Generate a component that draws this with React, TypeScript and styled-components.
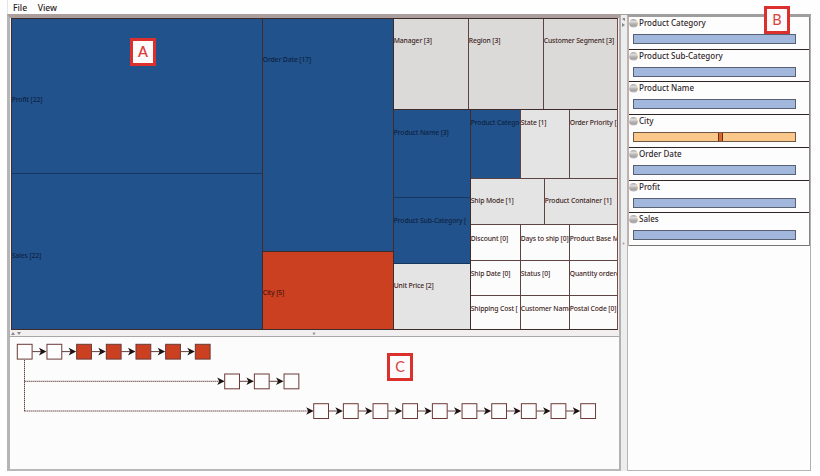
import React from "react";
import styled, { createGlobalStyle } from "styled-components";

const GlobalStyle = createGlobalStyle`
  * { box-sizing: border-box; }
  body { margin: 0; background: #fefefe; font-family: "Noto Sans", "DejaVu Sans", sans-serif; }
`;

const BLUE = "#22528b";
const RED = "#cc4022";
const GRAY = "#dbdad9";
const LIGHT = "#e5e4e4";
const WHITE = "#fdfcfc";

const Page = styled.div`
  position: relative;
  width: 820px;
  height: 476px;
  overflow: hidden;
  display: flex;
  flex-direction: column;
`;

const MenuBar = styled.nav`
  height: 14px;
  margin-left: 7px;
  padding: 2px 0 0 5px;
  display: flex;
  gap: 10.5px;
  border-left: 1px solid #e2e6e8;
  font-size: 8.6px;
  line-height: 12px;
  font-weight: 500;
  color: #2a2422;
`;

const MenuItem = styled.span``;

const Workspace = styled.main`
  display: flex;
  width: 804px;
  height: 457px;
  margin-left: 7px;
`;

const LeftPane = styled.section`
  display: flex;
  flex-direction: column;
  width: 614px;
  border-style: solid;
  border-color: #ab9e9d #b3b0b2 #b9b9ba #b4b5b6;
  border-width: 4px 2px 2px 3px;
  background: #f1efef;
`;

const TreeMap = styled.div`
  display: flex;
  gap: 1px;
  width: 607px;
  height: 312px;
  margin-left: 1px;
  flex: none;
  border: 1px solid #3e2c2b;
  border-right-color: #7a4a44;
  background: #3e2c2b;
`;

const Split = styled.div<{ $dir: "row" | "column"; $w?: number; $h?: number; $line?: string }>`
  display: flex;
  flex: none;
  gap: 1px;
  flex-direction: ${(p) => p.$dir};
  width: ${(p) => (p.$w ? `${p.$w}px` : "auto")};
  height: ${(p) => (p.$h ? `${p.$h}px` : "auto")};
  background: ${(p) => p.$line ?? "transparent"};
`;

const Tile = styled.div<{ $bg: string; $w?: number; $h?: number; $top: number }>`
  flex: ${(p) => (p.$w || p.$h ? "none" : "1")};
  width: ${(p) => (p.$w ? `${p.$w}px` : "auto")};
  height: ${(p) => (p.$h ? `${p.$h}px` : "auto")};
  padding-top: ${(p) => p.$top}px;
  overflow: hidden;
  white-space: nowrap;
  background: ${(p) => p.$bg};
  color: ${(p) => (p.$bg === BLUE ? "#0c2343" : p.$bg === RED ? "#4d150d" : "#3d2523")};
  font-size: 6.8px;
  line-height: 10px;
  letter-spacing: -0.12px;
  text-indent: -0.3px;
  font-weight: 500;
`;

const HSplitter = styled.div`
  display: flex;
  height: 7px;
  flex: none;
  align-items: center;
  padding-left: 1px;
  border-bottom: 1px solid #aaa6a7;
`;

const Graph = styled.div`
  flex: 1;
  background: ${WHITE};
  svg { display: block; }
`;

const VSplitter = styled.div`
  width: 6px;
  background: #ededee;
  border-top: 1px solid #a5a1a2;
  padding-top: 3px;
  svg { display: block; }
`;

const RightPane = styled.aside`
  flex: 1;
  border: 1px solid #b6b5b6;
  border-top: 3px solid #a09d9e;
  border-right: 1px solid #b0b0b1;
  background: #fefdfd;
`;

const FilterList = styled.ul`
  margin: 0;
  padding: 0;
  list-style: none;
  height: 229px;
  display: grid;
  grid-template-rows: repeat(7, 1fr);
  border-right: 1px solid #858385;
  border-left: 1px solid #c9aaa4;
`;

const FilterRow = styled.li`
  border-bottom: 1px solid #302424;
  padding-top: 1px;
  &:last-child { border-bottom-color: #797475; }
`;

const FilterHead = styled.div`
  display: flex;
  align-items: center;
  gap: 1px;
  height: 10px;
  font-size: 8px;
  font-weight: 500;
  line-height: 10px;
  color: #30272a;
  white-space: nowrap;
  svg { flex: none; }
`;

const Range = styled.div<{ $active?: boolean }>`
  display: flex;
  justify-content: center;
  width: 163px;
  height: 10px;
  margin: 6px 0 0 4px;
  border: 1px solid ${(p) => (p.$active ? "#725644" : "#586074")};
  background: ${(p) => (p.$active ? "#fbc88b" : "#a1b7db")};
`;

const Thumb = styled.span`
  width: 5px;
  margin-left: 12px;
  border: solid #6d2c14;
  border-width: 0 1px;
  background: #d8682b;
`;

const Badge = styled.div<{ $x: number; $y: number; $bold?: boolean }>`
  position: absolute;
  left: ${(p) => p.$x}px;
  top: ${(p) => p.$y}px;
  width: 26px;
  height: 28px;
  border: 3px solid #dc302d;
  background: #fdfbfb;
  color: #d8413c;
  font: ${(p) => (p.$bold ? 600 : 400)} 14.5px/22px Lato, "Open Sans", sans-serif;
  text-align: center;
`;

const names = ["Product Category", "Product Sub-Category", "Product Name", "City", "Order Date", "Profit", "Sales"];

const Ball = () => (
  <svg width="9" height="10" viewBox="0 0 9 10">
    <defs>
      <linearGradient id="ball" x1="0" y1="0" x2="0" y2="1">
        <stop offset="0" stopColor="#a5a3a3" />
        <stop offset="0.3" stopColor="#dedddd" />
        <stop offset="0.55" stopColor="#b5b3b3" />
        <stop offset="0.8" stopColor="#a3a1a1" />
        <stop offset="1" stopColor="#dddcdc" />
      </linearGradient>
    </defs>
    <circle cx="4.5" cy="5.4" r="4.4" fill="url(#ball)" />
  </svg>
);

const PITCH = 29.67;
const chains = [
  { x: 17.3, y: 344.3, count: 7, filledFrom: 2 },
  { x: 224.7, y: 374, count: 3, filledFrom: 99 },
  { x: 313.7, y: 403.7, count: 10, filledFrom: 99 },
];

const Arrow = ({ from, tip, y, dotted }: { from: number; tip: number; y: number; dotted?: boolean }) => (
  <g>
    <line x1={from} x2={tip - 5} y1={y} y2={y} stroke="#64423f" strokeWidth="1" strokeDasharray={dotted ? "1.4 0.6" : undefined} />
    <path d={`M${tip} ${y} l-7.5 -3.8 l2 3.8 l-2 3.8 z`} fill="#1b1212" />
  </g>
);

const GraphDrawing = () => (
  <svg width="608" height="131" viewBox="10 337 608 131">
    <path d="M24.5 360 V411.2" fill="none" stroke="#64423f" strokeDasharray="1.4 0.6" />
    {chains.map((c, row) => (
      <g key={row}>
        {row > 0 && <Arrow from={24.5} tip={c.x} y={c.y + 7.3} dotted />}
        {Array.from({ length: c.count }, (_, i) => {
          const x = c.x + i * PITCH;
          return (
            <g key={i}>
              {i > 0 && <Arrow from={x - PITCH + 15} tip={x - 0.5} y={c.y + 7.3} />}
              <rect x={x} y={c.y} width="14.8" height="14.8" fill={i >= c.filledFrom ? RED : "#fefdfd"} stroke="#6b3a36" />
            </g>
          );
        })}
      </g>
    ))}
  </svg>
);

export default function App() {
  return (
    <Page>
      <GlobalStyle />
      <MenuBar>
        <MenuItem>File</MenuItem>
        <MenuItem>View</MenuItem>
      </MenuBar>
      <Workspace>
        <LeftPane>
          <TreeMap>
            <Split $dir="column" $w={250} $line="#173660">
              <Tile $bg={BLUE} $h={154} $top={76}>Profit [22]</Tile>
              <Tile $bg={BLUE} $top={77}>Sales [22]</Tile>
            </Split>
            <Split $dir="column" $w={130}>
              <Tile $bg={BLUE} $h={232} $top={36}>Order Date [17]</Tile>
              <Tile $bg={RED} $top={36}>City [5]</Tile>
            </Split>
            <Split $dir="column" $w={223}>
              <Split $dir="row" $h={90} $line="#5e4441">
                <Tile $bg={GRAY} $w={74} $top={17}>Manager [3]</Tile>
                <Tile $bg={GRAY} $w={74} $top={17}>Region [3]</Tile>
                <Tile $bg={GRAY} $top={17}>Customer Segment [3]</Tile>
              </Split>
              <Split $dir="row" $h={219}>
                <Split $dir="column" $w={76} $line="#173660">
                  <Tile $bg={BLUE} $h={87} $top={18}>Product Name [3]</Tile>
                  <Tile $bg={BLUE} $h={65} $top={18}>Product Sub-Category [</Tile>
                  <Tile $bg={LIGHT} $top={17}>Unit Price [2]</Tile>
                </Split>
                <Split $dir="column" $w={146} $line="#5e4441">
                  <Split $dir="row" $h={68}>
                    <Tile $bg={BLUE} $w={49} $top={8}>Product Catego</Tile>
                    <Tile $bg={LIGHT} $w={48} $top={8}>State [1]</Tile>
                    <Tile $bg={LIGHT} $top={8}>Order Priority [</Tile>
                  </Split>
                  <Split $dir="row" $h={45}>
                    <Tile $bg={LIGHT} $w={73} $top={17}>Ship Mode [1]</Tile>
                    <Tile $bg={LIGHT} $top={17}>Product Container [1]</Tile>
                  </Split>
                  <Split $dir="row" $h={35}>
                    <Tile $bg={WHITE} $w={49} $top={9}>Discount [0]</Tile>
                    <Tile $bg={WHITE} $w={48} $top={9}>Days to ship [0]</Tile>
                    <Tile $bg={WHITE} $top={9}>Product Base M</Tile>
                  </Split>
                  <Split $dir="row" $h={34}>
                    <Tile $bg={WHITE} $w={49} $top={8}>Ship Date [0]</Tile>
                    <Tile $bg={WHITE} $w={48} $top={8}>Status [0]</Tile>
                    <Tile $bg={WHITE} $top={8}>Quantity ordere</Tile>
                  </Split>
                  <Split $dir="row" $h={33}>
                    <Tile $bg={WHITE} $w={49} $top={8}>Shipping Cost [</Tile>
                    <Tile $bg={WHITE} $w={48} $top={8}>Customer Name</Tile>
                    <Tile $bg={WHITE} $top={8}>Postal Code [0]</Tile>
                  </Split>
                </Split>
              </Split>
            </Split>
          </TreeMap>
          <HSplitter>
            <svg width="320" height="5" viewBox="0 0 320 5">
              <path d="M0 4 l2 -3 l2 3 z M6 1 h4 l-2 3 z" fill="#8d8888" />
              <circle cx="303" cy="2.5" r="1.2" fill="#a19d9d" />
            </svg>
          </HSplitter>
          <Graph>
            <GraphDrawing />
          </Graph>
        </LeftPane>
        <VSplitter>
          <svg width="6" height="230" viewBox="0 0 6 230">
            <path d="M4 -1 v4 l-3 -2 z M1 5 l3 2 l-3 2 z" fill="#8c8888" />
            <circle cx="2.5" cy="225.5" r="1" fill="#a19d9d" />
          </svg>
        </VSplitter>
        <RightPane>
          <FilterList>
            {names.map((name) => (
              <FilterRow key={name}>
                <FilterHead>
                  <Ball />
                  {name}
                </FilterHead>
                <Range $active={name === "City"}>{name === "City" && <Thumb />}</Range>
              </FilterRow>
            ))}
          </FilterList>
        </RightPane>
      </Workspace>
      <Badge $x={130} $y={38} $bold>A</Badge>
      <Badge $x={764} $y={6}>B</Badge>
      <Badge $x={387} $y={353}>C</Badge>
    </Page>
  );
}
